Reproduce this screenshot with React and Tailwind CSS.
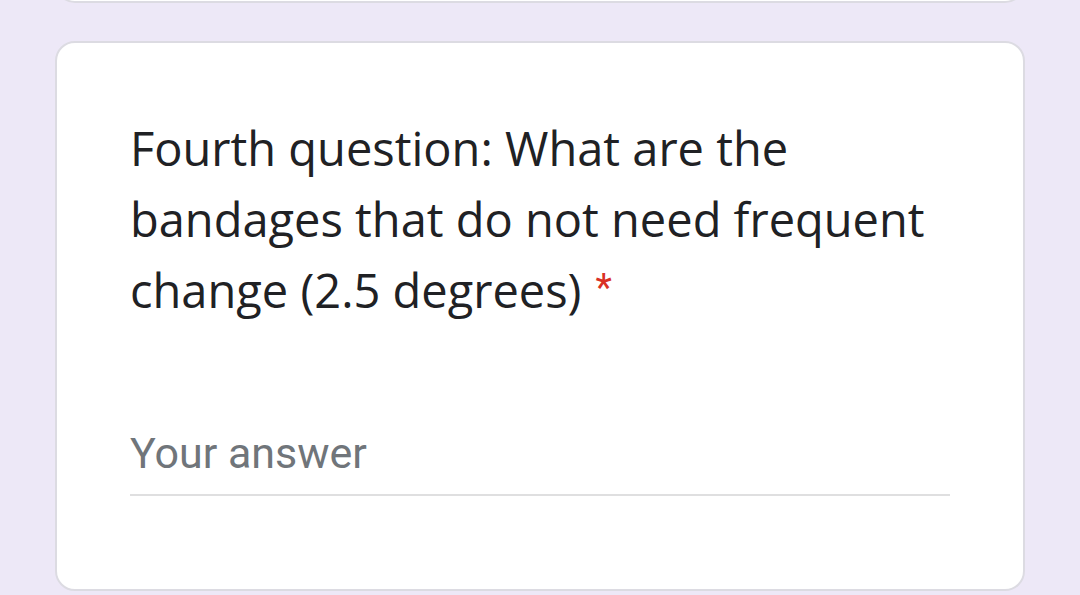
import React from "react";

const App = () => {
  return (
    <div className="min-h-[595px] h-[595px] overflow-hidden bg-[#ede8f7] px-[55px]">
      {/* previous question card, only its bottom edge shows */}
      <div className="-mt-[100px] h-[103px] rounded-[20px] border-2 border-[#dcdbe2] bg-white" />

      <div className="mt-[38px] h-[550px] rounded-[20px] border-2 border-[#dcdbe2] bg-white px-[73px] pt-[70px]">
        <h2
          className="text-[47px] leading-[71px] text-[#202124]"
          style={{ fontFamily: "'Open Sans', 'Noto Sans', sans-serif" }}
        >
          Fourth question: What are the bandages that do not need frequent
          change (2.5 degrees)
          <span
            className="ml-[14px] align-top text-[38px] leading-[66px] text-[#d93025]"
            style={{ fontFamily: "Roboto, sans-serif" }}
          >
            *
          </span>
        </h2>

        <div className="mt-[105px] border-b-2 border-[#dfdfe0] pb-[19px]">
          <div
            className="text-[43px] leading-[44px] text-[#70757a]"
            style={{ fontFamily: "Roboto, 'Liberation Sans', sans-serif" }}
          >
            Your answer
          </div>
        </div>
      </div>
    </div>
  );
};

export default App;
